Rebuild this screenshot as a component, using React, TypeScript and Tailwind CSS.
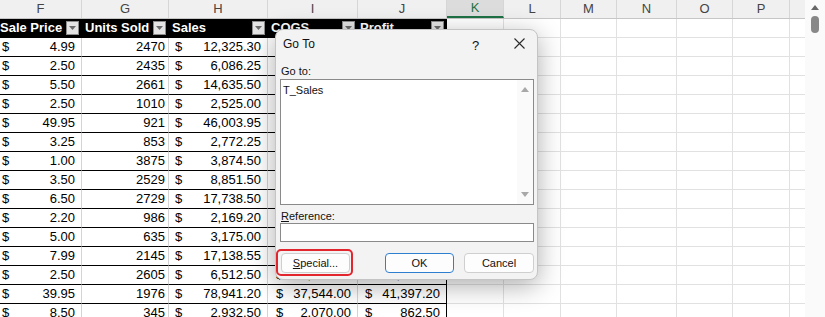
import React from "react";

type Col = { letter: string; w: string };

const cols: Col[] = [
  { letter: "F", w: "w-[82px]" },
  { letter: "G", w: "w-[87px]" },
  { letter: "H", w: "w-[99px]" },
  { letter: "I", w: "w-[90px]" },
  { letter: "J", w: "w-[89px]" },
  { letter: "K", w: "w-[57px]" },
  { letter: "L", w: "w-[57px]" },
  { letter: "M", w: "w-[56px]" },
  { letter: "N", w: "w-[60px]" },
  { letter: "O", w: "w-[56px]" },
  { letter: "P", w: "w-[57px]" },
];

const blankCols = cols.slice(5);

const headers = ["Sale Price", "Units Sold", "Sales", "COGS", "Profit"];

// price, units, sales, cogs, profit
const rows: string[][] = [
  ["4.99", "2470", "12,325.30", "5,928.00", "6,397.30"],
  ["2.50", "2435", "6,086.25", "3,652.50", "2,433.75"],
  ["5.50", "2661", "14,635.50", "7,983.00", "6,652.50"],
  ["2.50", "1010", "2,525.00", "1,515.00", "1,010.00"],
  ["49.95", "921", "46,003.95", "23,025.00", "22,978.95"],
  ["3.25", "853", "2,772.25", "1,706.00", "1,066.25"],
  ["1.00", "3875", "3,874.50", "1,937.50", "1,937.00"],
  ["3.50", "2529", "8,851.50", "5,058.00", "3,793.50"],
  ["6.50", "2729", "17,738.50", "10,916.00", "6,822.50"],
  ["2.20", "986", "2,169.20", "1,479.00", "690.20"],
  ["5.00", "635", "3,175.00", "1,905.00", "1,270.00"],
  ["7.99", "2145", "17,138.55", "8,580.00", "8,558.55"],
  ["2.50", "2605", "6,512.50", "3,907.50", "2,605.00"],
  ["39.95", "1976", "78,941.20", "37,544.00", "41,397.20"],
  ["8.50", "345", "2,932.50", "2,070.00", "862.50"],
];

function FilterButton() {
  return (
    <span className="ml-auto mr-[3px] flex h-[14px] w-[13px] shrink-0 items-center justify-center border border-[#8c8c8c] bg-[#e4e4e4]">
      <svg width="7" height="4" viewBox="0 0 7 4">
        <path d="M0 0 L7 0 L3.5 4 Z" fill="#6a6a6a" />
      </svg>
    </span>
  );
}

function Money({ value, w, pl, last }: { value: string; w: string; pl: string; last?: boolean }) {
  return (
    <div
      className={[
        "flex h-full shrink-0 items-center justify-between border-b border-black pr-[6px]",
        w,
        pl,
        last ? "border-r border-r-black" : "border-r border-r-[#d4d4d4]",
      ].join(" ")}
    >
      <span>$</span>
      <span>{value}</span>
    </div>
  );
}

function BlankCells() {
  return (
    <>
      {blankCols.map((c) => (
        <div key={c.letter} className={`h-full shrink-0 border-b border-r border-[#e1e1e1] ${c.w}`} />
      ))}
      <div className="h-full flex-1 border-b border-[#e1e1e1]" />
    </>
  );
}

function GoToDialog() {
  return (
    <div className="absolute left-[275px] top-[29px] flex h-[251px] w-[263px] flex-col rounded-[8px] border border-[#c4c4c4] bg-[#f3f3f3] pl-[4px] pr-[3px] font-['Liberation_Sans',sans-serif] text-[11px] text-[#111] shadow-[0_6px_26px_rgba(0,0,0,0.32)]">
      <div className="relative flex h-[27px] items-center pl-[3px] text-[12px]">
        <span>Go To</span>
        <span className="absolute left-[192px] top-[6px] text-[13px]">?</span>
        <svg className="absolute left-[234px] top-[8px]" width="11" height="11" viewBox="0 0 11 11">
          <path d="M0.5 0.5 L10.5 10.5 M10.5 0.5 L0.5 10.5" stroke="#2a2a2a" strokeWidth="1.1" />
        </svg>
      </div>

      <div className="mt-[7px] h-[14px] pl-[1px] leading-[14px]">Go to:</div>

      <div className="mt-[1px] flex h-[126px] border border-[#8a8a8a] bg-white">
        <div className="flex-1 pl-[2px] pt-[2px]">T_Sales</div>
        <div className="flex w-[16px] flex-col items-center justify-between bg-[#fafafa] py-[7px]">
          <svg width="8" height="5" viewBox="0 0 8 5">
            <path d="M4 0 L8 5 L0 5 Z" fill="#a8a8a8" />
          </svg>
          <svg width="8" height="5" viewBox="0 0 8 5">
            <path d="M0 0 L8 0 L4 5 Z" fill="#a8a8a8" />
          </svg>
        </div>
      </div>

      <div className="mt-[4px] h-[14px] pl-[1px] leading-[14px]">
        <span className="underline">R</span>eference:
      </div>
      <div className="h-[19px] border border-[#8a8a8a] bg-white" />

      <div className="mt-[11px] flex h-[20px] items-center">
        <div className="relative ml-[1px]">
          <button className="flex h-[20px] w-[69px] items-center justify-center rounded-[4px] border border-[#cfcfcf] bg-[#fdfdfd]">
            <span className="underline">S</span>pecial...
          </button>
          <span className="absolute -left-[5px] -top-[4px] h-[27px] w-[77px] rounded-[5px] border-2 border-[#e3262d]" />
        </div>
        <button className="ml-auto flex h-[20px] w-[69px] items-center justify-center rounded-[4px] border border-[#2f7fd0] bg-[#fdfdfd]">
          OK
        </button>
        <button className="ml-[10px] flex h-[20px] w-[70px] items-center justify-center rounded-[4px] border border-[#cfcfcf] bg-[#fdfdfd]">
          Cancel
        </button>
      </div>
    </div>
  );
}

export default function App() {
  return (
    <div className="flex h-[317px] w-[825px] overflow-hidden bg-white font-['Liberation_Sans',sans-serif] text-[13px] text-black">
      <div className="relative flex-1 overflow-hidden">
        {/* column letters */}
        <div className="flex h-[19px] border-b border-[#c6c6c6] bg-[#f0f0f0] text-[#444]">
          {cols.map((c) =>
            c.letter === "K" ? (
              <div
                key={c.letter}
                className={`flex shrink-0 items-center justify-center border-b-2 border-r border-b-[#1e7145] border-r-[#d6d6d6] bg-[#dcdcdc] text-[#1e7145] ${c.w}`}
              >
                {c.letter}
              </div>
            ) : (
              <div
                key={c.letter}
                className={`flex shrink-0 items-center justify-center border-r border-[#d6d6d6] ${c.w}`}
              >
                {c.letter}
              </div>
            )
          )}
          <div className="flex-1" />
        </div>

        {/* table header */}
        <div className="flex h-[19px]">
          {headers.map((h, i) => (
            <div
              key={h}
              className={[
                "flex h-full shrink-0 items-center border-b border-black bg-black font-bold text-white",
                cols[i].w,
                i === 0 ? "pl-0" : i === 4 ? "pl-[2px]" : "pl-[3px]",
              ].join(" ")}
            >
              <span>{h}</span>
              <FilterButton />
            </div>
          ))}
          <BlankCells />
        </div>

        {rows.map((r, idx) => (
          <div key={idx} className="flex h-[19px]">
            <Money value={r[0]} w="w-[82px]" pl="pl-[2px]" />
            <div className="flex h-full w-[87px] shrink-0 items-center justify-end border-b border-r border-b-black border-r-[#d4d4d4] pr-[3px]">
              {r[1]}
            </div>
            <Money value={r[2]} w="w-[99px]" pl="pl-[6px]" />
            <Money value={r[3]} w="w-[90px]" pl="pl-[8px]" />
            <Money value={r[4]} w="w-[89px]" pl="pl-[7px]" last />
            <BlankCells />
          </div>
        ))}

        <GoToDialog />
      </div>

      {/* vertical scrollbar */}
      <div className="flex w-[20px] shrink-0 flex-col items-center bg-[#fafafa] pt-[5px]">
        <svg width="8" height="5" viewBox="0 0 8 5">
          <path d="M4 0 L8 5 L0 5 Z" fill="#666666" />
        </svg>
        <div className="mt-[6px] h-[17px] w-[8px] rounded-full bg-[#888888]" />
      </div>
    </div>
  );
}
